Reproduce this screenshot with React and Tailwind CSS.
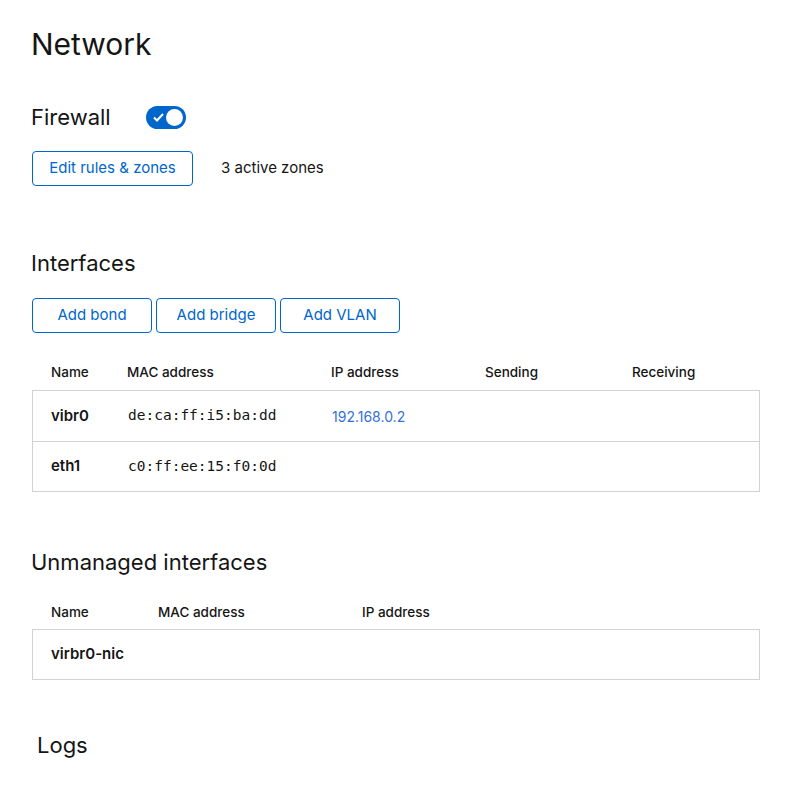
import React from "react";

const font = { fontFamily: "Inter, 'Noto Sans', sans-serif" };

const OutlineButton = ({ children, className = "" }) => (
  <button
    className={`h-[35px] rounded-[4px] border border-[#0066cc] text-[15px] text-[#0066cc] bg-white ${className}`}
  >
    {children}
  </button>
);

const Toggle = () => (
  <div className="relative h-[23px] w-[40px] rounded-full bg-[#0066cc]">
    <svg
      className="absolute left-[7px] top-[7px]"
      width="11"
      height="9"
      viewBox="0 0 11 9"
      fill="none"
    >
      <path d="M1 4.5 L4 7.5 L10 1" stroke="white" strokeWidth="2" />
    </svg>
    <div className="absolute right-[3px] top-[3px] h-[17px] w-[17px] rounded-full bg-white" />
  </div>
);

const interfaces = [
  { name: "vibr0", mac: "de:ca:ff:i5:ba:dd", ip: "192.168.0.2" },
  { name: "eth1", mac: "c0:ff:ee:15:f0:0d", ip: "" },
];

export default function App() {
  return (
    <div className="min-h-[790px] w-[800px] bg-white text-[#151515]" style={font}>
      <div className="pl-[31px] pr-[40px] pt-[26px]">
        <h1 className="text-[30px] leading-[36px]">Network</h1>

        <div className="mt-[41px] flex items-center">
          <h2 className="text-[22px] leading-[28px]">Firewall</h2>
          <div className="ml-[35px]">
            <Toggle />
          </div>
        </div>

        <div className="mt-[20px] flex items-center">
          <OutlineButton className="ml-[1px] w-[161px]">Edit rules &amp; zones</OutlineButton>
          <span className="ml-[28px] text-[15px]">3 active zones</span>
        </div>

        <h2 className="mt-[63px] text-[22px] leading-[28px]">Interfaces</h2>
        <div className="ml-[1px] mt-[21px] flex gap-[4px]">
          <OutlineButton className="w-[120px]">Add bond</OutlineButton>
          <OutlineButton className="w-[120px]">Add bridge</OutlineButton>
          <OutlineButton className="w-[120px]">Add VLAN</OutlineButton>
        </div>

        <div className="ml-[1px] mt-[22px]">
          <div className="flex h-[35px] items-center text-[13.5px] font-medium">
            <span className="w-[95px] pl-[19px]">Name</span>
            <span className="w-[204px]">MAC address</span>
            <span className="w-[154px]">IP address</span>
            <span className="w-[147px]">Sending</span>
            <span>Receiving</span>
          </div>
          <div className="border border-[#d2d2d2]">
            {interfaces.map((row, i) => (
              <div
                key={row.name}
                className={`flex h-[50px] items-center ${i > 0 ? "border-t border-[#d2d2d2]" : ""}`}
              >
                <span className="w-[95px] pl-[18px] text-[15px] font-semibold">{row.name}</span>
                <span
                  className="w-[204px] text-[14.5px]"
                  style={{ fontFamily: "'DejaVu Sans Mono', monospace" }}
                >
                  {row.mac}
                </span>
                <span className="text-[14px] text-[#3672d8]">{row.ip}</span>
              </div>
            ))}
          </div>
        </div>

        <h2 className="mt-[56px] text-[22px] leading-[28px]">Unmanaged interfaces</h2>
        <div className="ml-[1px] mt-[20px]">
          <div className="flex h-[33px] items-center text-[13.5px] font-medium">
            <span className="w-[126px] pl-[19px]">Name</span>
            <span className="w-[204px]">MAC address</span>
            <span>IP address</span>
          </div>
          <div className="flex h-[51px] items-center border border-[#d2d2d2]">
            <span className="pl-[18px] text-[15px] font-semibold">virbr0-nic</span>
          </div>
        </div>

        <h2 className="ml-[6px] mt-[51px] text-[22px] leading-[28px]">Logs</h2>
      </div>
    </div>
  );
}
